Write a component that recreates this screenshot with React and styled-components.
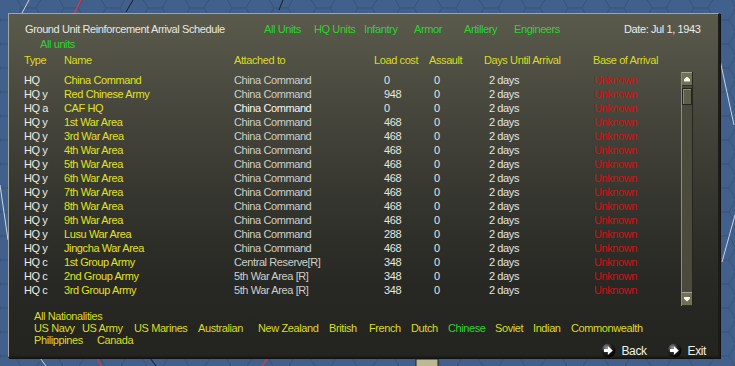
import React from 'react';
import styled, { createGlobalStyle } from 'styled-components';

const GlobalStyle = createGlobalStyle`
  html, body {
    margin: 0;
    padding: 0;
  }
  body {
    background: #3f5c86;
    font-family: "Liberation Sans", Arial, sans-serif;
    font-size: 11px;
    letter-spacing: -0.4px;
  }
`;

const filters = ['All Units', 'HQ Units', 'Infantry', 'Armor', 'Artillery', 'Engineers'];

const units = [
  ['HQ', 'China Command', 'China Command', '0'],
  ['HQ y', 'Red Chinese Army', 'China Command', '948'],
  ['HQ a', 'CAF HQ', 'China Command', '0', true],
  ['HQ y', '1st War Area', 'China Command', '468'],
  ['HQ y', '3rd War Area', 'China Command', '468'],
  ['HQ y', '4th War Area', 'China Command', '468'],
  ['HQ y', '5th War Area', 'China Command', '468'],
  ['HQ y', '6th War Area', 'China Command', '468'],
  ['HQ y', '7th War Area', 'China Command', '468'],
  ['HQ y', '8th War Area', 'China Command', '468'],
  ['HQ y', '9th War Area', 'China Command', '468'],
  ['HQ y', 'Lusu War Area', 'China Command', '288'],
  ['HQ y', 'Jingcha War Area', 'China Command', '468'],
  ['HQ c', '1st Group Army', 'Central Reserve[R]', '348'],
  ['HQ c', '2nd Group Army', '5th War Area [R]', '348'],
  ['HQ c', '3rd Group Army', '5th War Area [R]', '348'],
];

const nationsRow1 = [
  ['US Navy', 48], ['US Army', 52], ['US Marines', 64], ['Australian', 60],
  ['New Zealand', 71], ['British', 40], ['French', 42], ['Dutch', 37],
  ['Chinese', 47, true], ['Soviet', 38], ['Indian', 38], ['Commonwealth'],
];
const nationsRow2 = [['Philippines', 63], ['Canada']];

const MapBackground = () => (
  <MapSvg viewBox="0 0 735 366" preserveAspectRatio="none">
    <defs>
      <pattern id="hex" width="42" height="24" patternUnits="userSpaceOnUse" x="-6" y="-4">
        <path d="M0 12 L7 0 H21 L28 12 L21 24 H7 Z M28 12 H42" fill="none" stroke="#37527a" strokeWidth="1" />
      </pattern>
    </defs>
    <rect width="735" height="366" fill="#41608b" />
    <rect width="735" height="366" fill="url(#hex)" />
    <path d="M29 0 L22 13" stroke="#c9d4e4" strokeWidth="1" fill="none" />
    <path d="M81 0 L74 14" stroke="#c2404e" strokeWidth="1.5" fill="none" />
    <path d="M133 0 L126 12" stroke="#141c2a" strokeWidth="1" fill="none" />
    <path d="M283 0 L279 10" stroke="#141c2a" strokeWidth="1" fill="none" />
    <path d="M720 60 L734 125" stroke="#c9d4e4" strokeWidth="1" fill="none" />
    <path d="M735 215 L722 262" stroke="#c9d4e4" strokeWidth="1" fill="none" />
    <path d="M0 185 L8 240" stroke="#c9d4e4" strokeWidth="1" fill="none" />
    <path d="M40 358 L46 366" stroke="#c9d4e4" strokeWidth="1" fill="none" />
    <path d="M97 358 L101 366" stroke="#c2404e" strokeWidth="1.5" fill="none" />
    <path d="M150 358 L156 366" stroke="#141c2a" strokeWidth="1" fill="none" />
    <path d="M268 358 L262 366" stroke="#c2404e" strokeWidth="1.5" fill="none" />
    <rect x="416" y="359" width="22" height="8" fill="#bcb890" stroke="#222" strokeWidth="1" />
  </MapSvg>
);

const RoundArrow = () => (
  <svg width="15" height="15" viewBox="0 0 14 14">
    <defs>
      <radialGradient id="gloss" cx="0.35" cy="0.3" r="0.75">
        <stop offset="0" stopColor="#9a9a9a" />
        <stop offset="0.5" stopColor="#222" />
        <stop offset="1" stopColor="#000" />
      </radialGradient>
    </defs>
    <circle cx="7" cy="7" r="6.5" fill="url(#gloss)" />
    <path d="M2.8 5.5 H6.4 V2.8 L11 7 L6.4 11.2 V8.5 H2.8 Z" fill="#fff" />
  </svg>
);

const App = () => (
  <Screen>
    <GlobalStyle />
    <MapBackground />
    <Panel>
      <TitleRow>
        <Title>Ground Unit Reinforcement Arrival Schedule</Title>
        {filters.map(f => (
          <Filter key={f}>{f}</Filter>
        ))}
        <DateLabel>Date: Jul 1, 1943</DateLabel>
      </TitleRow>
      <SubFilter>All units</SubFilter>
      <HeaderRow>
        <span>Type</span>
        <span>Name</span>
        <span>Attached to</span>
        <span>Load cost</span>
        <span>Assault</span>
        <span>Days Until Arrival</span>
        <span>Base of Arrival</span>
      </HeaderRow>
      <Body>
        <Rows>
          {units.map(([type, name, attached, load, bright]) => (
            <Row key={name}>
              <TypeCell>{type}</TypeCell>
              <NameCell>{name}</NameCell>
              <AttachedCell $bright={bright}>{attached}</AttachedCell>
              <NumCell $pad={10}>{load}</NumCell>
              <NumCell $pad={5}>0</NumCell>
              <NumCell $pad={5}>2 days</NumCell>
              <BaseCell>Unknown</BaseCell>
            </Row>
          ))}
        </Rows>
        <Scrollbar>
          <ScrollButton>
            <ArrowUp />
          </ScrollButton>
          <Thumb />
          <Track />
          <ScrollButton>
            <ArrowDown />
          </ScrollButton>
        </Scrollbar>
      </Body>
      <Footer>
        <NationTitle>All Nationalities</NationTitle>
        <NationRow>
          {nationsRow1.map(([n, w, active]) => (
            <Nation key={n} $w={w} $active={active}>{n}</Nation>
          ))}
        </NationRow>
        <NationRow>
          {nationsRow2.map(([n, w]) => (
            <Nation key={n} $w={w}>{n}</Nation>
          ))}
        </NationRow>
        <Buttons>
          <NavButton>
            <RoundArrow />
            Back
          </NavButton>
          <NavButton>
            <RoundArrow />
            Exit
          </NavButton>
        </Buttons>
      </Footer>
    </Panel>
  </Screen>
);

export default App;


const Screen = styled.div`
  position: relative;
  width: 735px;
  height: 366px;
  overflow: hidden;
  padding: 13px 0 0 8px;
  box-sizing: border-box;
`;

const MapSvg = styled.svg`
  position: absolute;
  inset: 0;
  width: 735px;
  height: 366px;
`;

const Panel = styled.div`
  position: relative;
  width: 712px;
  height: 345px;
  box-sizing: border-box;
  padding: 8px 10px 0 15px;
  background: linear-gradient(#5a5a4c 0%, #48483e 25%, #35352f 55%, #272723 80%, #232320 100%);
  border-top: 1px solid #a4a49a;
  border-left: 1px solid #a4a49a;
  border-right: 2px solid #1b1b18;
  border-bottom: 2px solid #1b1b18;
  box-shadow: 1px 1px 0 #111;
`;

const TitleRow = styled.div`
  display: flex;
  line-height: 15px;
  height: 15px;
  white-space: nowrap;
`;

const Title = styled.div`
  width: 239px;
  padding-left: 1px;
  color: #e8e8e2;
`;

const Filter = styled.div`
  width: 50px;
  color: #2ed42e;
`;

const DateLabel = styled.div`
  margin-left: 60px;
  color: #ececec;
`;

const SubFilter = styled.div`
  line-height: 15px;
  height: 15px;
  padding-left: 16px;
  color: #2ed42e;
`;

const columns = '40px 170px 140px 55px 55px 109px 1fr';

const HeaderRow = styled.div`
  display: grid;
  grid-template-columns: ${columns};
  margin-top: 1px;
  line-height: 14px;
  height: 14px;
  color: #dcdc22;
  white-space: nowrap;
`;

const Body = styled.div`
  display: flex;
  margin-top: 5px;
  height: 234px;
`;

const Rows = styled.div`
  width: 657px;
  padding-top: 1px;
`;

const Row = styled.div`
  display: grid;
  grid-template-columns: ${columns};
  line-height: 14px;
  height: 14px;
  white-space: nowrap;
`;

const TypeCell = styled.span`
  color: #ececE6;
`;

const NameCell = styled.span`
  color: #e2e21e;
`;

const AttachedCell = styled.span`
  color: ${p => (p.$bright ? '#f6f6f6' : '#cfcfc9')};
`;

const NumCell = styled.span`
  padding-left: ${p => p.$pad}px;
  color: #e6e6e0;
`;

const BaseCell = styled.span`
  padding-left: 1px;
  color: #cc1414;
`;

const Scrollbar = styled.div`
  display: flex;
  flex-direction: column;
  width: 12px;
  box-sizing: border-box;
  border-left: 1px solid #8c8c78;
  border-right: 1px solid #26261f;
  background: #4a4a3d;
`;

const ScrollButton = styled.div`
  height: 12px;
  display: flex;
  flex-direction: column;
  align-items: center;
  justify-content: center;
  background: #707058;
  border-top: 1px solid #a6a690;
  border-bottom: 1px solid #303026;
`;

const ArrowUp = styled.div`
  width: 6px;
  height: 5px;
  background: #f4f4f0;
  clip-path: polygon(50% 0, 100% 55%, 100% 100%, 0 100%, 0 55%);
`;

const ArrowDown = styled(ArrowUp)`
  clip-path: polygon(0 0, 100% 0, 100% 45%, 50% 100%, 0 45%);
`;

const Thumb = styled.div`
  height: 15px;
  margin: 2px 0 0;
  background: #5e5e4a;
  border: 1px solid #262620;
  box-shadow: inset 1px 1px 0 #8a8a74;
`;

const Track = styled.div`
  flex: 1;
`;

const Footer = styled.div`
  margin-top: 4px;
  padding-left: 10px;
  line-height: 12px;
  color: #dcdc22;
  white-space: nowrap;
`;

const NationTitle = styled.div`
  height: 12px;
`;

const NationRow = styled.div`
  display: flex;
  height: 12px;
`;

const Nation = styled.div`
  width: ${p => (p.$w ? `${p.$w}px` : 'auto')};
  flex: none;
  color: ${p => (p.$active ? '#2ed42e' : '#dcdc22')};
`;

const Buttons = styled.div`
  display: flex;
  justify-content: flex-end;
  gap: 20px;
  margin-top: -3px;
  padding-right: 2px;
`;

const NavButton = styled.div`
  display: flex;
  align-items: center;
  gap: 6px;
  color: #f0f0ec;
  font-size: 12px;
`;
